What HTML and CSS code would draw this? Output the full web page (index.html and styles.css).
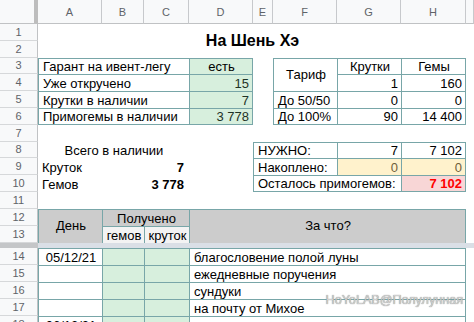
FILE: index.html
```html
<!DOCTYPE html>
<html lang="ru">
<head>
<meta charset="utf-8">
<title>На Шень Хэ</title>
<link rel="stylesheet" href="styles.css">
</head>
<body>
<div class="sheet">
  <div class="colhdr corner cx r0"></div>
  <div class="colhdr ca r0">A</div>
  <div class="colhdr cb r0">B</div>
  <div class="colhdr cc r0">C</div>
  <div class="colhdr cd r0">D</div>
  <div class="colhdr ce r0">E</div>
  <div class="colhdr cf r0">F</div>
  <div class="colhdr cg r0">G</div>
  <div class="colhdr chh r0">H</div>
  <div class="colhdr ci r0"></div>

  <div class="rowhdr r1">1</div>
  <div class="rowhdr r2">2</div>
  <div class="rowhdr r3">3</div>
  <div class="rowhdr r4">4</div>
  <div class="rowhdr r5">5</div>
  <div class="rowhdr r6">6</div>
  <div class="rowhdr r7">7</div>
  <div class="rowhdr r8">8</div>
  <div class="rowhdr r9">9</div>
  <div class="rowhdr r10">10</div>
  <div class="rowhdr r11">11</div>
  <div class="rowhdr r12">12</div>
  <div class="rowhdr r13">13</div>
  <div class="divl rd"></div>
  <div class="divr rd"></div>
  <div class="rowhdr r14">14</div>
  <div class="rowhdr r15">15</div>
  <div class="rowhdr r16">16</div>
  <div class="rowhdr r17">17</div>
  <div class="rowhdr r18">18</div>

  <div class="c title cah r1-2">На Шень Хэ</div>

  <div class="c t cac r3">Гарант на ивент-легу</div>
  <div class="c t tR green ctr cd r3">есть</div>
  <div class="c t cac r4">Уже откручено</div>
  <div class="c t tR green num rt cd r4">15</div>
  <div class="c t cac r5">Крутки в наличии</div>
  <div class="c t tR green num rt cd r5">7</div>
  <div class="c t tB cac r6">Примогемы в наличии</div>
  <div class="c t tR tB green num rt cd r6">3 778</div>

  <div class="c t ctr mid cf r3-4">Тариф</div>
  <div class="c t ctr cg r3">Крутки</div>
  <div class="c t tR ctr chh r3">Гемы</div>
  <div class="c t rt cg r4">1</div>
  <div class="c t tR rt chh r4">160</div>
  <div class="c t cf r5">До 50/50</div>
  <div class="c t rt cg r5">0</div>
  <div class="c t tR rt chh r5">0</div>
  <div class="c t tB cf r6">До 100%</div>
  <div class="c t tB rt cg r6">90</div>
  <div class="c t tR tB rt chh r6">14 400</div>

  <div class="c ctr cac r8">Всего в наличии</div>
  <div class="c ca r9">Круток</div>
  <div class="c bold rt pr cbc r9">7</div>
  <div class="c ca r10">Гемов</div>
  <div class="c bold rt pr cbc r10">3 778</div>

  <div class="c t cef r8">НУЖНО:</div>
  <div class="c t rt cg r8">7</div>
  <div class="c t tR rt chh r8">7 102</div>
  <div class="c t cef r9">Накоплено:</div>
  <div class="c t beige zero rt cg r9">0</div>
  <div class="c t tR beige zero rt chh r9">0</div>
  <div class="c t tB ceg r10">Осталось примогемов:</div>
  <div class="c t tR tB pink red bold rt chh r10">7 102</div>

  <div class="c t gray ctr mid ca r12-13">День</div>
  <div class="c t gray ctr cbc r12">Получено</div>
  <div class="c t light ctr cb r13">гемов</div>
  <div class="c t light ctr cc r13">круток</div>
  <div class="c t tR gray ctr mid cdh r12-13">За что?</div>

  <div class="c t ctr ca r14">05/12/21</div>
  <div class="c t green cb r14"></div>
  <div class="c t green cc r14"></div>
  <div class="c t tR cdh r14">благословение полой луны</div>

  <div class="c t ca r15"></div>
  <div class="c t green cb r15"></div>
  <div class="c t green cc r15"></div>
  <div class="c t tR cdh r15">ежедневные поручения</div>

  <div class="c t ca r16"></div>
  <div class="c t green cb r16"></div>
  <div class="c t green cc r16"></div>
  <div class="c t tR cdh r16">сундуки</div>

  <div class="c t ca r17"></div>
  <div class="c t green cb r17"></div>
  <div class="c t green cc r17"></div>
  <div class="c t tR cdh r17">на почту от Михое</div>

  <div class="c t ctr ca r18">06/12/21</div>
  <div class="c t green cb r18"></div>
  <div class="c t green cc r18"></div>
  <div class="c t tR cdh r18"></div>

  <div class="watermark">HoYoLAB@Полулунная</div>
</div>
</body>
</html>
```

FILE: styles.css
```css
* { box-sizing: border-box; }

html, body {
  margin: 0;
  padding: 0;
  background: #ffffff;
}

body {
  font-family: "Liberation Sans", Arial, sans-serif;
  font-size: 13px;
  color: #000000;
}

.sheet {
  --teal: #78a6a8;
  position: relative;
  display: grid;
  grid-template-columns: 38px 64px 42px 45px 64px 20px 64px 64px 65px 8px;
  grid-template-rows: 24px repeat(11, 16.8px) 17px 17px 5px repeat(5, 17px);
  width: 474px;
  height: 322px;
  overflow: hidden;
}

/* rows */
.r0 { grid-row: 1; }
.r1 { grid-row: 2; }
.r2 { grid-row: 3; }
.r3 { grid-row: 4; }
.r4 { grid-row: 5; }
.r5 { grid-row: 6; }
.r6 { grid-row: 7; }
.r7 { grid-row: 8; }
.r8 { grid-row: 9; }
.r9 { grid-row: 10; }
.r10 { grid-row: 11; }
.r11 { grid-row: 12; }
.r12 { grid-row: 13; }
.r13 { grid-row: 14; }
.rd { grid-row: 15; }
.r14 { grid-row: 16; }
.r15 { grid-row: 17; }
.r16 { grid-row: 18; }
.r17 { grid-row: 19; }
.r18 { grid-row: 20; }
.r1-2 { grid-row: 2 / 4; }
.r3-4 { grid-row: 4 / 6; }
.r12-13 { grid-row: 13 / 15; }

/* columns */
.cx { grid-column: 1; }
.ca { grid-column: 2; }
.cb { grid-column: 3; }
.cc { grid-column: 4; }
.cd { grid-column: 5; }
.ce { grid-column: 6; }
.cf { grid-column: 7; }
.cg { grid-column: 8; }
.chh { grid-column: 9; }
.ci { grid-column: 10; }
.cac { grid-column: 2 / 5; }
.cbc { grid-column: 3 / 5; }
.cdh { grid-column: 5 / 10; }
.cah { grid-column: 2 / 10; }
.cef { grid-column: 6 / 8; }
.ceg { grid-column: 6 / 9; }

/* headers */
.colhdr {
  background: #f8f9fa;
  color: #5f6368;
  font-size: 11px;
  display: flex;
  align-items: center;
  justify-content: center;
  border-right: 1px solid #c7c9cc;
  border-bottom: 1px solid #c0c2c4;
}

.corner {
  border-right: 4px solid #bdbdbd;
}

.rowhdr {
  grid-column: 1;
  background: #f8f9fa;
  color: #5f6368;
  font-size: 11px;
  display: flex;
  align-items: center;
  justify-content: center;
  border-right: 1px solid #c0c2c4;
  border-bottom: 1px solid #d6d8da;
}

.divl {
  grid-column: 1;
  background: #c4c6c8;
}

.divr {
  grid-column: 2 / 11;
  background: #dadfe6;
}

/* cells */
.c {
  display: flex;
  align-items: flex-end;
  padding: 0 3px 0 4px;
  line-height: 14px;
  white-space: nowrap;
  overflow: hidden;
  min-width: 0;
}

.title {
  justify-content: center;
  align-items: center;
  font-size: 16px;
  font-weight: bold;
  line-height: 18px;
}

.t {
  border-left: 1px solid var(--teal);
  border-top: 1px solid var(--teal);
}

.tR { border-right: 1px solid var(--teal); }
.tB { border-bottom: 1px solid var(--teal); }

.rt { justify-content: flex-end; }
.ctr { justify-content: center; }
.mid { align-items: center; }
.pr { padding-right: 5px; }
.bold { font-weight: bold; }

.green { background: #d7efdd; }
.num { color: #1e3326; }
.beige { background: #fff2cc; }
.zero { color: #6f5f3a; }
.pink { background: #f8d6d6; }
.red { color: #ff0000; }
.gray { background: #cccccc; }
.light { background: #f3f3f3; }

.watermark {
  position: absolute;
  right: 11px;
  top: 293px;
  font-size: 12.6px;
  line-height: 14px;
  color: #cfcfcf;
  text-shadow: 0 0 1px #6f6f6f;
  white-space: nowrap;
}
```
